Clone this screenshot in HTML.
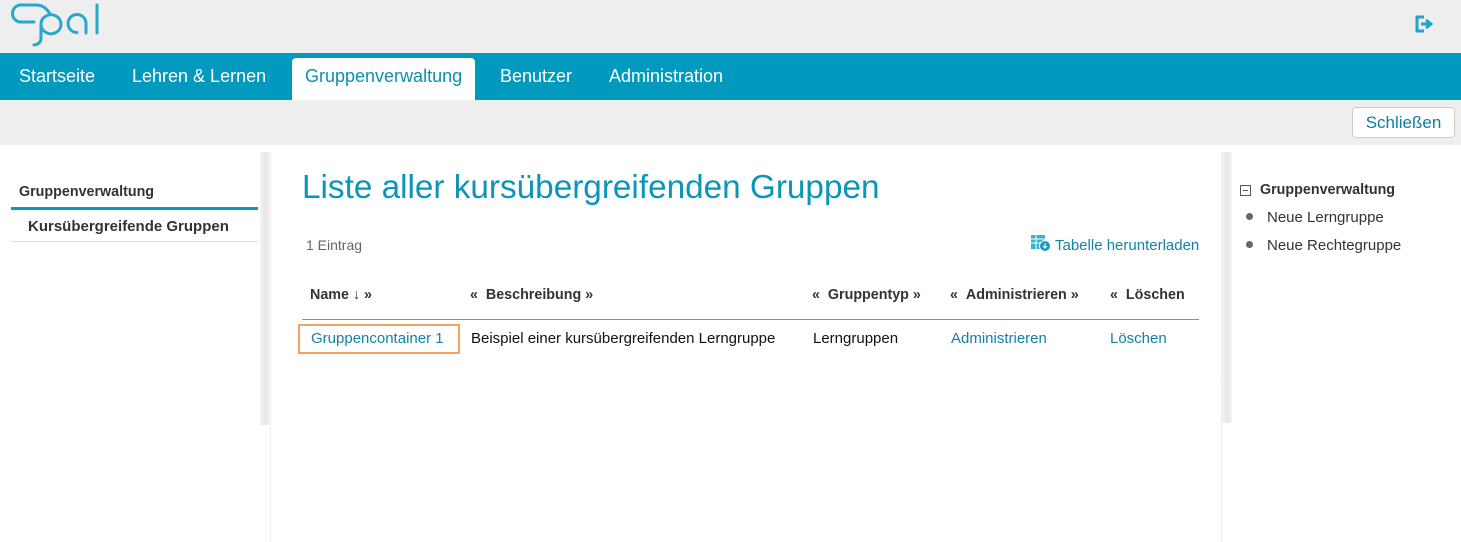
<!DOCTYPE html>
<html><head><meta charset="utf-8"><style>
*{margin:0;padding:0;box-sizing:border-box}
body{width:1461px;height:542px;overflow:hidden;background:#fff;font-family:"Liberation Sans",Arial,sans-serif;position:relative}
.a{position:absolute;white-space:nowrap}
.top{left:0;top:0;width:1461px;height:53px;background:#eeeeee}
.nav{left:0;top:53px;width:1461px;height:47px;background:#0199bd}
.nav span{position:absolute;top:13px;color:#fff;font-size:18px}
.tab{left:292px;top:58px;width:183px;height:42px;background:#fff;border-radius:4px 4px 0 0}
.tb{left:0;top:100px;width:1461px;height:45px;background:#eeeeee}
.btn{left:1352px;top:107px;width:103px;height:31px;background:#fff;border:1px solid #ccc;border-radius:4px;color:#0c7fa0;font-size:17px;text-align:center;line-height:29px}
.g{width:10px;background:linear-gradient(90deg,#f4f4f4,#e6e6e6,#f4f4f4)}
.h{color:#333;font-weight:bold;font-size:14.3px}
.lk{color:#1482a9}
</style></head><body>
<div class="a top"></div>
<svg class="a" style="left:0;top:0" width="110" height="50" viewBox="0 0 110 50" fill="none" stroke="#28a9cb" stroke-width="3" stroke-linecap="round">
<path d="M50 14 Q45 5 36 5 H21 a8.5 8.5 0 0 0 0 17 H34"/>
<path d="M41 38 V24 a10 9.5 0 1 1 0 0.5"/>
<path d="M41 38 Q41 44 34 45"/>
<path d="M86 33 v-10 a9 9 0 1 0 -9 9.5"/>
<path d="M97 5 v28"/>
</svg>
<svg class="a" style="left:1413px;top:14px" width="22" height="20" viewBox="0 0 22 20"><path d="M11 3H4v14h7" stroke="#20a4c8" stroke-width="3" fill="none"/><path d="M8 10h8M13 6l5 4-5 4" stroke="#20a4c8" stroke-width="3" fill="none"/></svg>
<div class="a nav"><span style="left:19px">Startseite</span><span style="left:132px">Lehren &amp; Lernen</span><span style="left:500px">Benutzer</span><span style="left:609px">Administration</span></div>
<div class="a tab"><span class="a" style="left:13px;top:8px;color:#0c8fb3;font-size:18px">Gruppenverwaltung</span></div>
<div class="a tb"></div>
<div class="a btn">Schließen</div>
<div class="a g" style="left:260px;top:152px;height:273px"></div>
<div class="a g" style="left:1222px;top:152px;height:271px"></div>
<div class="a" style="left:270px;top:152px;width:1px;height:390px;background:#eee"></div>
<div class="a" style="left:1221px;top:152px;width:1px;height:390px;background:#eee"></div>
<div class="a h" style="left:19px;top:184px">Gruppenverwaltung</div>
<div class="a" style="left:11px;top:207px;width:247px;height:3px;background:#0a9bbc"></div>
<div class="a h" style="left:28px;top:218px;font-size:15px">Kursübergreifende Gruppen</div>
<div class="a" style="left:11px;top:241px;width:247px;height:1px;background:#ddd"></div>
<div class="a" style="left:302px;top:169px;font-size:33.3px;color:#0b95ba">Liste aller kursübergreifenden Gruppen</div>
<div class="a" style="left:306px;top:237px;font-size:14px;color:#666">1 Eintrag</div>
<svg class="a" style="left:1030px;top:234px" width="21" height="18" viewBox="0 0 21 18"><rect x="1" y="1" width="14" height="14" fill="#36b3d4"/><path d="M1 5h14M1 9h14M6 1v14" stroke="#fff"/><circle cx="15" cy="12" r="5.5" fill="#1a9cc2" stroke="#fff"/><path d="M15 9v5M13 12l2 2 2-2" stroke="#fff" fill="none"/></svg>
<div class="a lk" style="left:1055px;top:237px;font-size:15px">Tabelle herunterladen</div>
<div class="a h" style="left:310px;top:287px">Name ↓ »</div>
<div class="a h" style="left:470px;top:287px">« &nbsp;Beschreibung »</div>
<div class="a h" style="left:812px;top:287px">« &nbsp;Gruppentyp »</div>
<div class="a h" style="left:950px;top:287px">« &nbsp;Administrieren »</div>
<div class="a h" style="left:1110px;top:287px">« &nbsp;Löschen</div>
<div class="a" style="left:302px;top:319px;width:897px;height:1px;background:#8a8f9c"></div>
<div class="a" style="left:298px;top:324px;width:162px;height:30px;border:2px solid #f0a35e"></div>
<div class="a lk" style="left:311px;top:330px;font-size:15px">Gruppencontainer 1</div>
<div class="a" style="left:471px;top:330px;font-size:15px;color:#111">Beispiel einer kursübergreifenden Lerngruppe</div>
<div class="a" style="left:813px;top:330px;font-size:15px;color:#111">Lerngruppen</div>
<div class="a lk" style="left:951px;top:330px;font-size:15px">Administrieren</div>
<div class="a lk" style="left:1110px;top:330px;font-size:15px">Löschen</div>
<div class="a" style="left:1240px;top:185px;width:11px;height:11px;border:1px solid #555"></div>
<div class="a" style="left:1243px;top:190px;width:5px;height:1px;background:#555"></div>
<div class="a h" style="left:1260px;top:182px">Gruppenverwaltung</div>
<div class="a" style="left:1246px;top:213px;width:7px;height:7px;border-radius:50%;background:#666"></div>
<div class="a" style="left:1267px;top:209px;font-size:15px;color:#333">Neue Lerngruppe</div>
<div class="a" style="left:1246px;top:241px;width:7px;height:7px;border-radius:50%;background:#666"></div>
<div class="a" style="left:1267px;top:237px;font-size:15px;color:#333">Neue Rechtegruppe</div>
</body></html>
